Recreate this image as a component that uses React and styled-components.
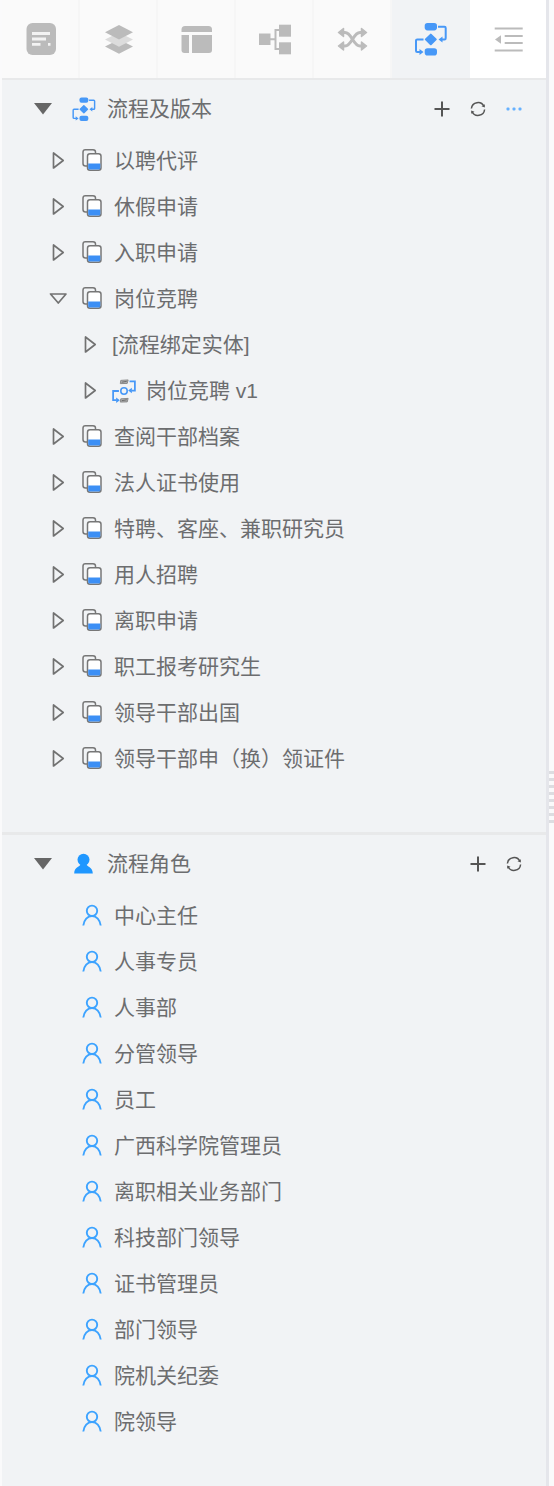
import React, { useState } from "react";
import styled, { createGlobalStyle } from "styled-components";

const GlobalStyle = createGlobalStyle`
  * { box-sizing: border-box; }
  body {
    margin: 0;
    background: #fafafb;
    color: #6c6d6f;
    font-family: "Liberation Sans", "Noto Sans CJK SC", sans-serif;
    font-size: 21px;
    line-height: 30px;
  }
  button {
    margin: 0;
    padding: 0;
    border: 0;
    background: none;
    color: inherit;
    font: inherit;
    cursor: pointer;
  }
  ul { list-style: none; margin: 0; padding: 0; }
`;

const Page = styled.div`
  display: flex;
  min-height: 100vh;
  padding-left: 2px;
`;

const Panel = styled.aside`
  flex: 1;
  min-width: 0;
  background: #f1f3f5;
`;

const Gutter = styled.div`
  flex: none;
  width: 8px;
  display: flex;
  flex-direction: column;
  justify-content: center;
  gap: 4px;
  padding-top: 108px;
  border-left: 3px solid #e5e6eb;
  cursor: col-resize;
`;

const GripLine = styled.span`
  height: 3px;
  background: #dcdde1;
`;

const Toolbar = styled.nav`
  display: grid;
  grid-template-columns: repeat(6, 78fr) 76fr;
  height: 80px;
  border-bottom: 2px solid #e8e9ea;
`;

const Tab = styled.button`
  display: flex;
  align-items: center;
  justify-content: center;
  background: ${(p) => p.$background || "#fafafa"};
  box-shadow: ${(p) => (p.$background ? "none" : "inset -2px 0 #f6f6f6")};
  color: ${(p) => (p.$active ? "#4798f7" : "#bbbbbb")};
`;

const Section = styled.section`
  padding-bottom: ${(p) => (p.$divided ? 50 : 40)}px;
  border-bottom: ${(p) => (p.$divided ? "3px solid #e8e9ea" : "0")};
`;

const SectionHeader = styled.header`
  display: flex;
  align-items: center;
  gap: 10px;
  height: 58px;
  padding: 0 14px 0 23px;
`;

const SectionTitle = styled.h2`
  flex: 1;
  margin: 0;
  font-size: 21px;
  font-weight: 400;
`;

const HeaderToggle = styled.button`
  display: flex;
  justify-content: center;
  width: 36px;
  color: #666666;
`;

const HeaderIcon = styled.span`
  color: #4798f7;
`;

const Actions = styled.div`
  display: flex;
`;

const ActionButton = styled.button`
  display: flex;
  align-items: center;
  justify-content: center;
  width: 36px;
  height: 36px;
  color: ${(p) => (p.$accent ? "#66b1ff" : "#555555")};
`;

const Row = styled.div`
  display: flex;
  align-items: center;
  gap: 10px;
  height: 46px;
  padding-left: ${(p) => 44 + p.$level * 32}px;
  white-space: nowrap;
`;

const RoleRow = styled(Row)`
  padding-left: 78px;
`;

const RowToggle = styled.button`
  display: flex;
  align-items: center;
  justify-content: center;
  width: 24px;
  height: 24px;
  color: #727272;
`;

const Icon = styled.svg.attrs({ "aria-hidden": true })`
  display: block;
  flex: none;
  width: ${(p) => p.$size}px;
  height: ${(p) => p.$size}px;
`;

const FormIcon = () => (
  <Icon $size={36} viewBox="0 0 36 36">
    <rect x="3.5" y="2" width="29.5" height="32" rx="6" fill="currentColor" />
    <path d="M9 12.5H27M9 18H23M9 23.3H17.5M25 23.3H27.5" stroke="#f3f3f3" strokeWidth="2.8" />
  </Icon>
);

const LayersIcon = () => (
  <Icon $size={36} viewBox="0 0 36 36">
    <path d="M18 18.5L32 25.6L18 32.7L4 25.6Z" fill="currentColor" />
    <path d="M18 11.5L32 18.6L18 25.8L4 18.6Z" fill="#dcdcdc" />
    <path d="M18 4L32 11.3L18 18.6L4 11.3Z" fill="currentColor" />
  </Icon>
);

const LayoutIcon = () => (
  <Icon $size={36} viewBox="0 0 36 36" fill="currentColor">
    <path d="M2.5 11V8.5A3.5 3.5 0 0 1 6 5H29.5A3.5 3.5 0 0 1 33 8.5V11Z" />
    <path d="M2.5 14H10V32H5.5A3 3 0 0 1 2.5 29Z" />
    <path d="M13 14H33V29A3 3 0 0 1 30 32H13Z" />
  </Icon>
);

const TreeIcon = () => (
  <Icon $size={36} viewBox="0 0 36 36" fill="currentColor">
    <rect x="2" y="12.5" width="11.5" height="11.5" />
    <rect x="22" y="3.7" width="12" height="12" />
    <rect x="22" y="21.3" width="12" height="12" />
    <path d="M13 18.3H18.5M22 9H18.5V28H22" fill="none" stroke="currentColor" strokeWidth="2" />
  </Icon>
);

const ShuffleIcon = () => (
  <Icon $size={36} viewBox="0 0 36 36" fill="currentColor">
    <path
      d="M8 11.5H10C17 11.5 18 25 25 25H28M8 25H10C17 25 18 11.5 25 11.5H28"
      fill="none"
      stroke="currentColor"
      strokeWidth="3"
    />
    <path
      d="M3.5 11.5L8.500 7.500V15.500ZM3.500 25L8.500 21V29ZM31.500 11.500L26.500 7.500V15.500ZM31.500 25L26.500 21V29Z"
      stroke="currentColor"
      strokeWidth="1.500"
      strokeLinejoin="round"
    />
  </Icon>
);

const FlowIcon = ({ size = 36 }) => (
  <Icon $size={size} viewBox="0 0 36 36" fill="currentColor">
    <rect x="11.700" y="2" width="12.300" height="7.400" rx="2.800" />
    <rect x="11.700" y="27.200" width="12.300" height="7.400" rx="2.800" />
    <path
      d="M17.800 13.600L22.800 18.400L17.800 23.200L12.800 18.400Z"
      stroke="currentColor"
      strokeWidth="2"
      strokeLinejoin="round"
    />
    <path
      d="M25 5.800H31.500Q32.700 5.800 32.700 7V17.200Q32.700 18.400 31.500 18.400H29M10.500 18.400H4.200Q3 18.400 3 19.600V29.800Q3 31 4.200 31H7"
      fill="none"
      stroke="currentColor"
      strokeWidth="2"
    />
    <path d="M25.500 18.400L29.500 15.400V21.400ZM10.500 31L6.500 28V34Z" />
  </Icon>
);

const CollapseIcon = () => (
  <Icon $size={36} viewBox="0 0 36 36">
    <path d="M4.700 7.500H32.700M14.700 15H32.700M14.700 22H32.700M4.700 29.500H32.700" stroke="currentColor" strokeWidth="2" />
    <path d="M5 18.500L11 14.300V22.700Z" fill="currentColor" />
  </Icon>
);

const FlowVersionIcon = () => (
  <Icon $size={24} viewBox="0 0 26 26" fill="none">
    <path d="M19 2.500H24.800V12.500H21M7.500 13H1.200V23H5" stroke="#4798f7" strokeWidth="1.900" />
    <path d="M17.500 12.500L21.500 9.500V15.500ZM8.500 23L4.500 20V26Z" fill="#4798f7" />
    <circle cx="13" cy="13" r="3.500" stroke="#4798f7" strokeWidth="1.700" />
    <path d="M9.500 1.500L17.500 1L16.500 4.800L9 5ZM9.500 21.500L17.500 21L16.500 24.800L9 25Z" fill="#b0b0b0" stroke="#858585" />
    <path d="M10.500 3.500L16 2.500M10.500 23.500L16 22.500" stroke="#666666" />
  </Icon>
);

const CopyIcon = () => (
  <Icon $size={24} viewBox="0 0 24 24" fill="none">
    <path
      d="M7 17H5.500A2.500 2.500 0 0 1 3 14.500V3A2.300 2.300 0 0 1 5.300 0.800H13A2.500 2.500 0 0 1 15.500 3.300V4.500"
      stroke="#777777"
      strokeWidth="1.500"
    />
    <rect x="7.500" y="4.700" width="13.500" height="16.500" rx="2.500" fill="#ffffff" stroke="#777777" strokeWidth="1.500" />
    <path d="M8.200 14.500H20.300V19A1.500 1.500 0 0 1 18.800 20.500H9.700A1.500 1.500 0 0 1 8.200 19Z" fill="#3c8ff5" />
  </Icon>
);

const UserIcon = () => (
  <Icon $size={24} viewBox="0 0 24 24" fill="none" stroke="#3da3ff" strokeWidth="1.900">
    <circle cx="12" cy="6.800" r="5.200" />
    <path d="M3.300 21.500C4 16 7.500 12 12 12S20 16 20.700 21.500" />
  </Icon>
);

const UserSolidIcon = () => (
  <Icon $size={26} viewBox="0 0 26 26" fill="#1f97ff">
    <circle cx="12.500" cy="8.800" r="6" />
    <path d="M9.500 13H15.500C15.500 16 21.800 15.500 21.800 22.500H3.200C3.200 15.500 9.500 16 9.500 13Z" />
  </Icon>
);

const SolidCaret = () => (
  <Icon $size={20} viewBox="0 0 20 20">
    <path d="M1 4H19L10 15.500Z" fill="currentColor" />
  </Icon>
);

const OutlineCaret = ({ open }) => (
  <Icon $size={20} viewBox="0 0 20 20" fill="none" stroke="currentColor" strokeWidth="1.700" strokeLinejoin="round">
    <path d={open ? "M2.500 5H18L10.300 14Z" : "M5.500 2V17L15.200 9.500Z"} />
  </Icon>
);

const PlusIcon = () => (
  <Icon $size={16} viewBox="0 0 16 16">
    <path d="M8 0.500V15.500M0.500 8H15.500" stroke="currentColor" strokeWidth="2" />
  </Icon>
);

const RefreshIcon = () => (
  <Icon $size={18} viewBox="0 0 18 18" fill="none">
    <path d="M2.400 8.500A6.600 6.600 0 0 1 15 6.500M15.600 9.500A6.600 6.600 0 0 1 3 11.500" stroke="currentColor" strokeWidth="1.500" />
    <path d="M15.800 4.300V7.500L12.500 6.300ZM2.200 13.700V10.500L5.500 11.700Z" fill="currentColor" />
  </Icon>
);

const MoreIcon = () => (
  <Icon $size={18} viewBox="0 0 18 18" fill="currentColor">
    <rect x="1.500" y="7.500" width="3" height="3" rx="1" />
    <rect x="7.500" y="7.500" width="3" height="3" rx="1" />
    <rect x="13.500" y="7.500" width="3" height="3" rx="1" />
  </Icon>
);

const tabs = [
  { label: "表单", icon: FormIcon },
  { label: "图层", icon: LayersIcon },
  { label: "布局", icon: LayoutIcon },
  { label: "结构", icon: TreeIcon },
  { label: "关联", icon: ShuffleIcon },
  { label: "流程", icon: FlowIcon, background: "#f1f3f5", active: true },
  { label: "收起", icon: CollapseIcon, background: "#ffffff" },
];

const processes = [
  { name: "以聘代评" },
  { name: "休假申请" },
  { name: "入职申请" },
  { name: "岗位竞聘", children: [{ name: "[流程绑定实体]" }, { name: "岗位竞聘 v1", icon: FlowVersionIcon }] },
  { name: "查阅干部档案" },
  { name: "法人证书使用" },
  { name: "特聘、客座、兼职研究员" },
  { name: "用人招聘" },
  { name: "离职申请" },
  { name: "职工报考研究生" },
  { name: "领导干部出国" },
  { name: "领导干部申（换）领证件" },
];

const roles = [
  "中心主任",
  "人事专员",
  "人事部",
  "分管领导",
  "员工",
  "广西科学院管理员",
  "离职相关业务部门",
  "科技部门领导",
  "证书管理员",
  "部门领导",
  "院机关纪委",
  "院领导",
];

function TreeNode({ node, level = 0 }) {
  const [open, setOpen] = useState(Boolean(node.children));
  const NodeIcon = level === 0 ? CopyIcon : node.icon;
  return (
    <li>
      <Row $level={level}>
        <RowToggle type="button" aria-label={node.name} aria-expanded={open} onClick={() => setOpen(!open)}>
          <OutlineCaret open={open} />
        </RowToggle>
        {NodeIcon && <NodeIcon />}
        <span>{node.name}</span>
      </Row>
      {open && node.children && (
        <ul>
          {node.children.map((child) => (
            <TreeNode key={child.name} node={child} level={level + 1} />
          ))}
        </ul>
      )}
    </li>
  );
}

function PanelSection({ title, icon, more, divided, children }) {
  const [open, setOpen] = useState(true);
  return (
    <Section $divided={divided}>
      <SectionHeader>
        <HeaderToggle type="button" aria-label={title} aria-expanded={open} onClick={() => setOpen(!open)}>
          <SolidCaret />
        </HeaderToggle>
        <HeaderIcon>{icon}</HeaderIcon>
        <SectionTitle>{title}</SectionTitle>
        <Actions>
          <ActionButton type="button" aria-label="新增">
            <PlusIcon />
          </ActionButton>
          <ActionButton type="button" aria-label="刷新">
            <RefreshIcon />
          </ActionButton>
          {more && (
            <ActionButton type="button" aria-label="更多" $accent>
              <MoreIcon />
            </ActionButton>
          )}
        </Actions>
      </SectionHeader>
      {open && <ul>{children}</ul>}
    </Section>
  );
}

export default function App() {
  return (
    <>
      <GlobalStyle />
      <Page>
        <Panel>
          <Toolbar>
            {tabs.map(({ label, icon: TabIcon, background, active }) => (
              <Tab key={label} type="button" aria-label={label} $background={background} $active={active}>
                <TabIcon />
              </Tab>
            ))}
          </Toolbar>
          <PanelSection title="流程及版本" icon={<FlowIcon size={26} />} more divided>
            {processes.map((node) => (
              <TreeNode key={node.name} node={node} />
            ))}
          </PanelSection>
          <PanelSection title="流程角色" icon={<UserSolidIcon />}>
            {roles.map((role) => (
              <li key={role}>
                <RoleRow $level={0}>
                  <UserIcon />
                  <span>{role}</span>
                </RoleRow>
              </li>
            ))}
          </PanelSection>
        </Panel>
        <Gutter>
          {Array.from({ length: 8 }, (_, i) => (
            <GripLine key={i} />
          ))}
        </Gutter>
      </Page>
    </>
  );
}
